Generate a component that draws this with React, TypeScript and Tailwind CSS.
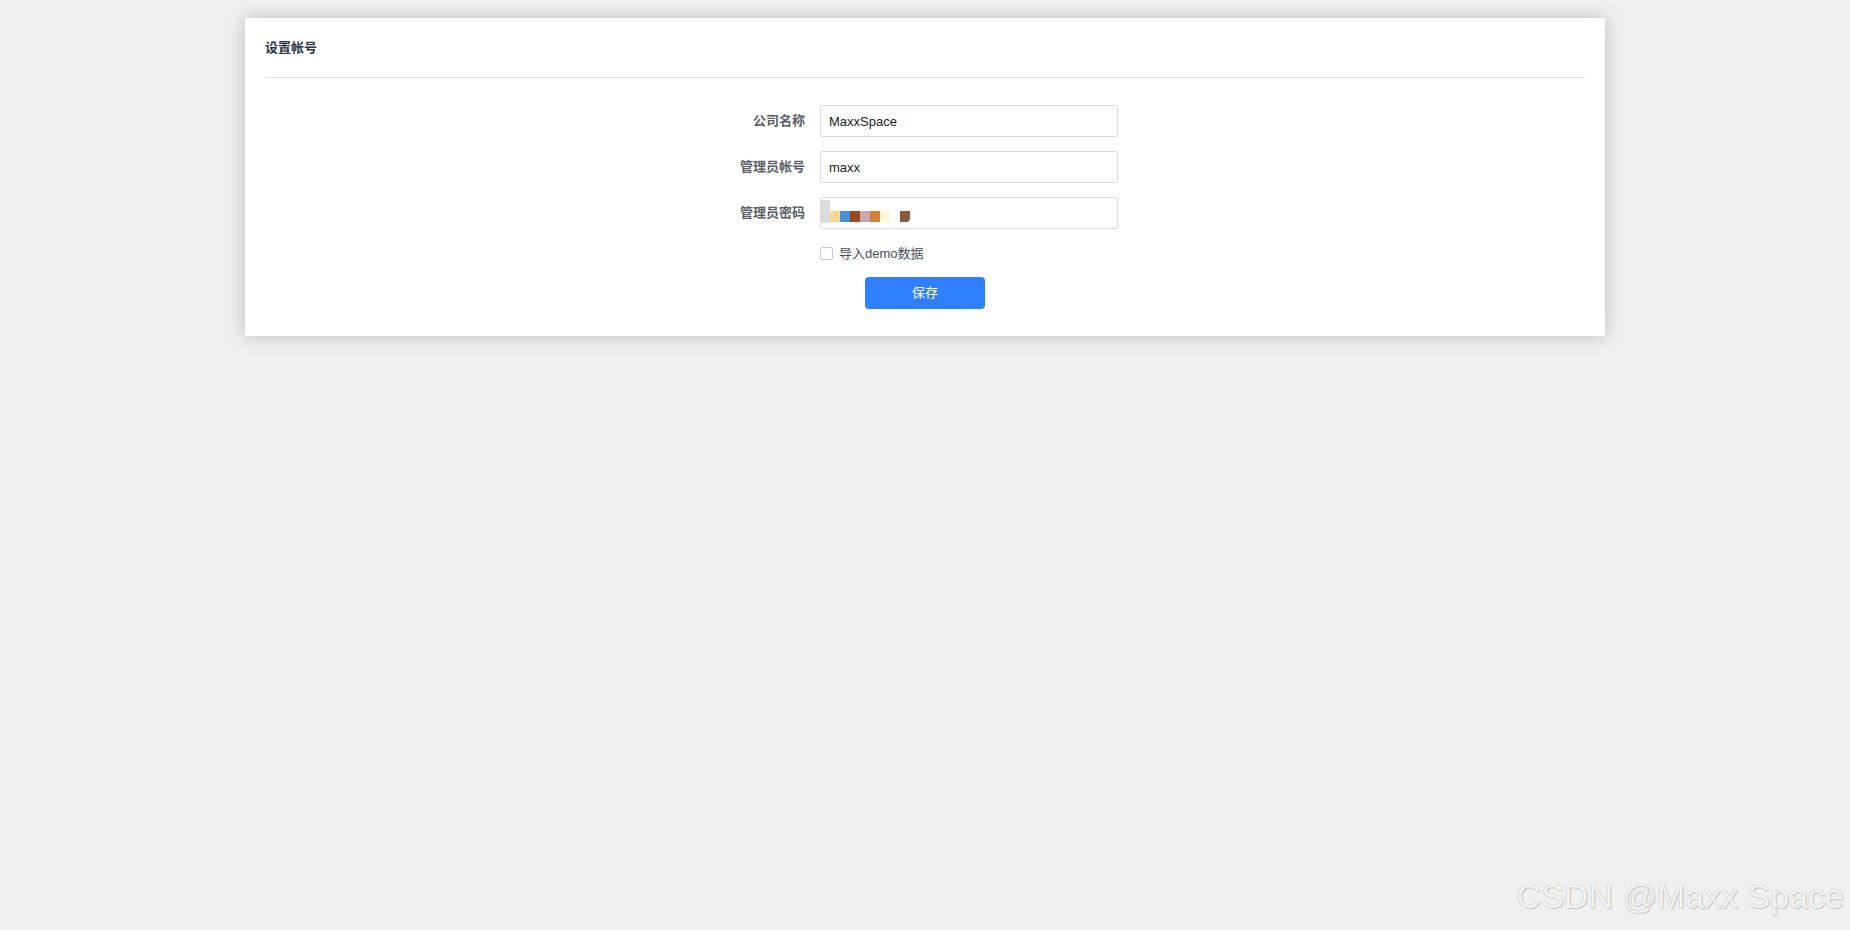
import React from "react";

const font = { fontFamily: '"Liberation Sans", "Noto Sans CJK SC", sans-serif' };

const Row = ({ label, children }: { label: string; children: React.ReactNode }) => (
  <div className="flex items-center">
    <label className="w-[88px] pr-[15px] text-right text-[13px] font-bold text-[#5a5e66]">{label}</label>
    {children}
  </div>
);

const App = () => {
  return (
    <div className="min-h-[930px] w-full bg-[#f0f0f0] relative overflow-hidden" style={font}>
      <div className="pt-[18px] pl-[245px]">
        <div className="w-[1360px] h-[318px] bg-white shadow-[0_0_18px_rgba(0,0,0,0.22)] px-5 pt-5">
          <div className="h-[40px] border-b border-[#e4e4e4] flex items-start pt-[1px]">
            <h2 className="text-[13px] font-bold leading-[18px] text-[#2c3447]">设置帐号</h2>
          </div>
          <div className="flex flex-col items-center mt-[27px]">
            <div className="w-[386px] flex flex-col gap-[14px]">
              <Row label="公司名称">
                <input
                  defaultValue="MaxxSpace"
                  className="w-[298px] h-8 border border-[#dcdcdc] rounded-[2px] px-[8px] text-[13px] text-[#222] outline-none"
                />
              </Row>
              <Row label="管理员帐号">
                <input
                  defaultValue="maxx"
                  className="w-[298px] h-8 border border-[#dcdcdc] rounded-[2px] px-[8px] text-[13px] text-[#222] outline-none"
                />
              </Row>
              <Row label="管理员密码">
                <div className="w-[298px] h-8 border border-[#dcdcdc] rounded-[2px] flex items-center">
                  <div className="w-[10px] h-[23px] bg-[#dcdcdc] rounded-l-[3px] self-start mt-[2px] -ml-[1px]" />
                  <div className="flex items-center mt-[7px]">
                    <span className="w-[10px] h-[11px] bg-[#fbd99a]" />
                    <span className="w-[10px] h-[11px] bg-[#4a90d9]" />
                    <span className="w-[10px] h-[11px] bg-[#994a22]" />
                    <span className="w-[10px] h-[11px] bg-[#c9a7b2]" />
                    <span className="w-[10px] h-[11px] bg-[#d0823a]" />
                    <span className="w-[10px] h-[11px] bg-[#fff9db]" />
                    <span className="w-[10px] h-[11px]" />
                    <span className="w-[10px] h-[11px] bg-[#8b5a3c] rounded-br-[4px]" />
                  </div>
                </div>
              </Row>
              <div className="flex items-center pl-[88px] mt-[1px]">
                <span className="w-[13px] h-[13px] border border-[#c8c8c8] rounded-[2px] bg-white" />
                <span className="ml-[6px] text-[13px] text-[#4a4f5a]">导入demo数据</span>
              </div>
            </div>
            <button className="mt-[13px] w-[120px] h-8 rounded-[4px] bg-[#2f80ff] text-white text-[13px]">保存</button>
          </div>
        </div>
      </div>
      <div className="absolute right-[6px] bottom-[17px] text-[34px] leading-none text-[#f3f3f3] [text-shadow:0_0_1px_#a8a8a8,1px_1px_1px_#c8c8c8]">
        CSDN @Maxx Space
      </div>
    </div>
  );
};

export default App;
